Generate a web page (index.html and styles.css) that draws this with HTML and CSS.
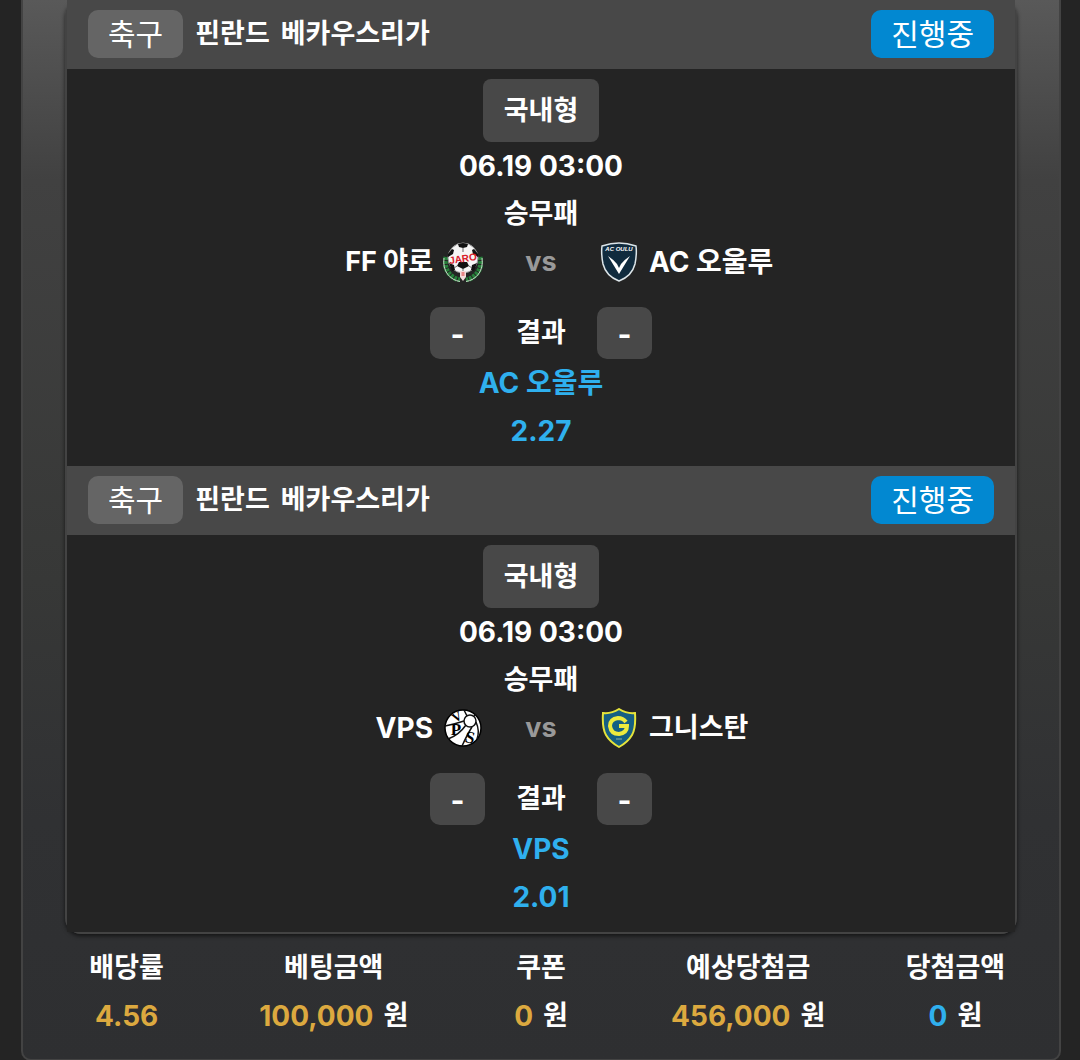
FILE: index.html
```
<!DOCTYPE html>
<html lang="ko">
<head>
    <meta charset="UTF-8">
    <meta name="viewport" content="width=device-width, initial-scale=1.0">
    <title>베팅내역</title>
    <link rel="stylesheet" href="styles.css">
</head>
<body>
    <main class="slip">
        <div class="slip-card">
            <!-- FF 야로 vs AC 오울루 -->
            <section class="match">
                <header class="match-header">
                    <span class="sport">축구</span>
                    <h2 class="league"><span>핀란드</span><span>베카우스리가</span></h2>
                    <span class="status">진행중</span>
                </header>
                <div class="match-body">
                    <span class="type">국내형</span>
                    <p class="num">06.19 03:00</p>
                    <p>승무패</p>
                    <div class="versus">
                        <div class="team home">
                            <span>FF 야로</span>
                            <svg class="logo" viewBox="0 0 40 40">
                                <g fill="none" stroke="#26803a" stroke-width="5" stroke-dasharray="3 1">
                                    <path d="M3 15C0 27 7 36 17 38"/>
                                    <path d="M37 15C40 27 33 36 23 38"/>
                                </g>
                                <g fill="none" stroke="#c8d8c8" stroke-width="1">
                                    <path d="M1 16C-1 29 7 38 17 39.500"/>
                                    <path d="M39 16C41 29 33 38 23 39.500"/>
                                </g>
                                <circle cx="20" cy="16" r="15" fill="#f6f6f6" stroke="#999" stroke-width="1"/>
                                <path d="M15 2l5-1 5 1-1 3-4 1-4-1zM5 12l4-5 2 1-1 4-5 3zM35 12l-4-5-2 1 1 4 5 3zM16 20h8l2 4-6 3-6-3zM6 21l5 2 1 5-3 1zM34 21l-5 2-1 5 3 1z" fill="#111"/>
                                <path d="M20 6v4M14 24l-3 2M26 24l3 2M20 27v3" stroke="#666" fill="none"/>
                                <text x="20" y="20" class="jaro" transform="rotate(-8 20 17)">JARO</text>
                                <path d="M17 29h6v6l-3 4-3-4z" fill="#f4dcdc"/>
                                <path d="M18.500 31h3M18.500 33h3" stroke="#d33"/>
                            </svg>
                        </div>
                        <span class="vs">vs</span>
                        <div class="team away">
                            <svg class="logo" viewBox="0 0 40 40">
                                <path d="M3 4Q12 1 20 1T37 4Q38 12 36 22 33 34 20 39 7 34 4 22 2 12 3 4z" fill="#102b3e" stroke="#dce5e9" stroke-width="1.500"/>
                                <text x="20" y="9" class="oulu">AC OULU</text>
                                <path d="M9 14q6 4 9 8l2 4 2-4q3-4 9-8l-11 18z" fill="#fff"/>
                            </svg>
                            <span class="num">AC 오울루</span>
                        </div>
                    </div>
                    <div class="result">
                        <span class="score">-</span>
                        <span>결과</span>
                        <span class="score">-</span>
                    </div>
                    <p class="num blue">AC 오울루</p>
                    <p class="num blue">2.27</p>
                </div>
            </section>

            <!-- VPS vs 그니스탄 -->
            <section class="match">
                <header class="match-header">
                    <span class="sport">축구</span>
                    <h2 class="league"><span>핀란드</span><span>베카우스리가</span></h2>
                    <span class="status">진행중</span>
                </header>
                <div class="match-body">
                    <span class="type">국내형</span>
                    <p class="num">06.19 03:00</p>
                    <p>승무패</p>
                    <div class="versus">
                        <div class="team home">
                            <span class="num">VPS</span>
                            <svg class="logo" viewBox="0 0 40 40">
                                <circle cx="20" cy="20" r="18" fill="#fff" stroke="#000" stroke-width="1.500"/>
                                <g fill="none" stroke="#111" stroke-width="1.500">
                                    <circle cx="27" cy="13" r="6"/>
                                    <path d="M2 18Q12 16 21 13M23 17Q16 27 5 31M29 19Q25 25 19 38M33 14Q37 23 34 31M24 8L21 2M31 8l2-2"/>
                                </g>
                                <text x="14" y="13" class="vps-small" transform="rotate(-28 14 9)">V</text>
                                <text x="13" y="27" class="vps">P</text>
                                <text x="27" y="35" class="vps" transform="rotate(12 27 30)">S</text>
                            </svg>
                        </div>
                        <span class="vs">vs</span>
                        <div class="team away">
                            <svg class="logo" viewBox="0 0 40 40">
                                <path d="M20 1Q28 6 36 5 37 20 33 27 29 34 20 39 11 34 7 27 3 20 4 5 12 6 20 1z" fill="#155f83" stroke="#e5e43b" stroke-width="2"/>
                                <path d="M27 14Q24 10 19 10q-8 1-8 8 1 8 9 8 8-1 8-8h-8" fill="none" stroke="#eeea3e" stroke-width="4"/>
                                <path d="M17 31h6" stroke="#8fb0a0"/>
                            </svg>
                            <span>그니스탄</span>
                        </div>
                    </div>
                    <div class="result">
                        <span class="score">-</span>
                        <span>결과</span>
                        <span class="score">-</span>
                    </div>
                    <p class="num blue">VPS</p>
                    <p class="num blue">2.01</p>
                </div>
            </section>
        </div>

        <dl class="summary">
            <div>
                <dt>배당률</dt>
                <dd><span class="num gold">4.56</span></dd>
            </div>
            <div>
                <dt>베팅금액</dt>
                <dd><span class="num gold">100,000</span><span>원</span></dd>
            </div>
            <div>
                <dt>쿠폰</dt>
                <dd><span class="num gold">0</span><span>원</span></dd>
            </div>
            <div>
                <dt>예상당첨금</dt>
                <dd><span class="num gold">456,000</span><span>원</span></dd>
            </div>
            <div>
                <dt>당첨금액</dt>
                <dd><span class="num blue">0</span><span>원</span></dd>
            </div>
        </dl>
    </main>
</body>
</html>
```
FILE: styles.css
```
* {
    margin: 0;
    padding: 0;
    box-sizing: border-box;
}

body {
    background-color: #242424;
    color: #fff;
    font-family: Inter, "Noto Sans CJK KR", sans-serif;
    font-size: 27px;
    font-weight: 700;
    line-height: 48px;
    padding: 0 19px 0 21px;
}

.slip {
    background: linear-gradient(#595959, #414141 180px, #373837 580px, #303133 820px, #2e2f31);
    border: 2px solid #434343;
    border-top: none;
    border-radius: 0 0 10px 10px;
    padding-bottom: 19px;
}

.slip-card {
    margin: 0 42px;
    border: 2px solid #434343;
    border-top: none;
    border-radius: 16px;
    box-shadow: 0 2px 4px rgba(0, 0, 0, 0.6);
}

.match-header {
    display: flex;
    align-items: center;
    height: 69px;
    padding: 0 21px 1px;
    background-color: #484848;
}

.sport, .status {
    border-radius: 10px;
    padding: 0 20px;
    font-size: 30px;
    font-weight: 400;
}

.sport {
    background-color: #656565;
}

.status {
    background-color: #0288d1;
    margin-left: auto;
}

.league {
    display: flex;
    gap: 11px;
    margin-left: 12px;
    font-size: 27px;
}

.match-body {
    display: flex;
    flex-direction: column;
    align-items: center;
    background-color: #242424;
    padding: 10px 0 11px;
}

.num {
    font-size: 28px;
}

.type {
    background-color: #484848;
    border-radius: 8px;
    padding: 8px 21px 7px;
}

.versus, .result {
    display: grid;
    grid-template-columns: 1fr 112px 1fr;
    align-items: center;
    width: 100%;
    text-align: center;
}

.versus {
    grid-template-columns: 1fr 116px 1fr;
}

.team {
    display: flex;
    align-items: center;
    gap: 10px;
}

.home {
    justify-content: flex-end;
}

.logo {
    width: 40px;
    height: 40px;
}

.vs {
    color: #999;
}

.result {
    padding-top: 21px;
}

.score {
    width: 55px;
    background-color: #484848;
    border-radius: 10px;
    padding: 3px 0 1px;
    font-size: 30px;
}

.score:first-child {
    justify-self: end;
}

.blue {
    color: #2fb0ee;
}

.gold {
    color: #dca93f;
}

.summary {
    display: grid;
    grid-template-columns: repeat(5, 1fr);
    padding-top: 10px;
    text-align: center;
}

.summary dd {
    display: flex;
    justify-content: center;
    gap: 10px;
}

/* Lettering inside the club crests */
.jaro, .oulu, .vps, .vps-small {
    text-anchor: middle;
    font-weight: 700;
}

.jaro {
    fill: #d8202c;
    font-family: "Liberation Sans", sans-serif;
    font-size: 10px;
}

.oulu {
    fill: #fff;
    font-family: "Liberation Sans", sans-serif;
    font-size: 6px;
    font-style: italic;
}

.vps, .vps-small {
    fill: #000;
    font-family: "Liberation Serif", serif;
    font-size: 17px;
}

.vps-small {
    font-size: 13px;
}
```
